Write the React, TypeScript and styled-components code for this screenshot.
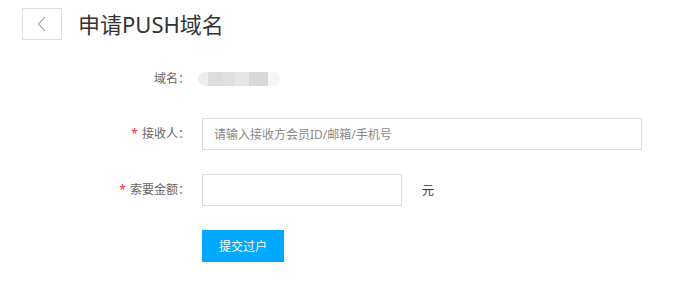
import styled, { createGlobalStyle } from "styled-components";

const GlobalStyle = createGlobalStyle`
  body {
    margin: 0;
    background: #fff;
    font-family: "Noto Sans", "Noto Sans CJK SC", sans-serif;
    color: #333;
  }
`;

function App() {
  return (
    <>
      <GlobalStyle />
      <Page>
        <Header>
          <BackButton aria-label="返回">
            <svg width="10" height="16" viewBox="0 0 10 16">
              <polyline
                points="8,1 1.5,8 8,15"
                fill="none"
                stroke="#999"
                strokeWidth="1.1"
              />
            </svg>
          </BackButton>
          <Title>申请PUSH域名</Title>
        </Header>

        <Form>
          <Row $height={30}>
            <Label>域名：</Label>
            <Masked />
          </Row>
          <Row>
            <Label>
              <Star>*</Star>接收人：
            </Label>
            <Input $width={440} placeholder="请输入接收方会员ID/邮箱/手机号" />
          </Row>
          <Row>
            <Label>
              <Star>*</Star>索要金额：
            </Label>
            <Input $width={200} />
            <Unit>元</Unit>
          </Row>
          <Row>
            <Spacer />
            <SubmitButton>提交过户</SubmitButton>
          </Row>
        </Form>
      </Page>
    </>
  );
}

export default App;

const Page = styled.div`
  padding: 8px 22px 0;
`;

const Header = styled.div`
  display: flex;
  align-items: center;
  gap: 16px;
  height: 32px;
`;

const BackButton = styled.button`
  display: flex;
  align-items: center;
  justify-content: center;
  width: 40px;
  height: 32px;
  padding: 0;
  background: #fff;
  border: 1px solid #ddd;
  cursor: pointer;
`;

const Title = styled.h1`
  margin: 0;
  font-size: 22px;
  font-weight: 400;
  line-height: 32px;
  color: #333;
`;

const Form = styled.div`
  display: flex;
  flex-direction: column;
  gap: 24px;
  margin-top: 24px;
`;

const Row = styled.div<{ $height?: number }>`
  display: flex;
  align-items: center;
  height: ${(p) => p.$height ?? 32}px;
`;

const Label = styled.label`
  width: 168px;
  margin-right: 12px;
  text-align: right;
  font-size: 12px;
  line-height: 16px;
  color: #666;
  white-space: nowrap;
`;

const Spacer = styled.div`
  width: 180px;
`;

const Star = styled.span`
  color: #f23030;
  margin-right: 4px;
`;

const Masked = styled.div`
  width: 82px;
  height: 14px;
  margin-left: -4px;
  border-radius: 7px;
  background: linear-gradient(
    to right,
    #eeeeee 0 12%,
    #dcdcdc 12% 30%,
    #dfe0e0 30% 45%,
    #e6e6e6 45% 62%,
    #d8d8da 62% 85%,
    #f6f6f6 85% 100%
  );
`;

const Input = styled.input<{ $width: number }>`
  box-sizing: border-box;
  width: ${(p) => p.$width}px;
  height: 32px;
  padding: 0 11px;
  border: 1px solid #ddd;
  border-radius: 0;
  outline: none;
  font-family: inherit;
  font-size: 12px;
  color: #333;

  &::placeholder {
    color: #888;
  }
`;

const Unit = styled.span`
  margin-left: 20px;
  font-size: 12px;
  color: #333;
`;

const SubmitButton = styled.button`
  width: 82px;
  height: 32px;
  padding: 0;
  border: none;
  border-radius: 0;
  background: #00a9ff;
  color: #fff;
  font-family: inherit;
  font-size: 12px;
  cursor: pointer;
`;
